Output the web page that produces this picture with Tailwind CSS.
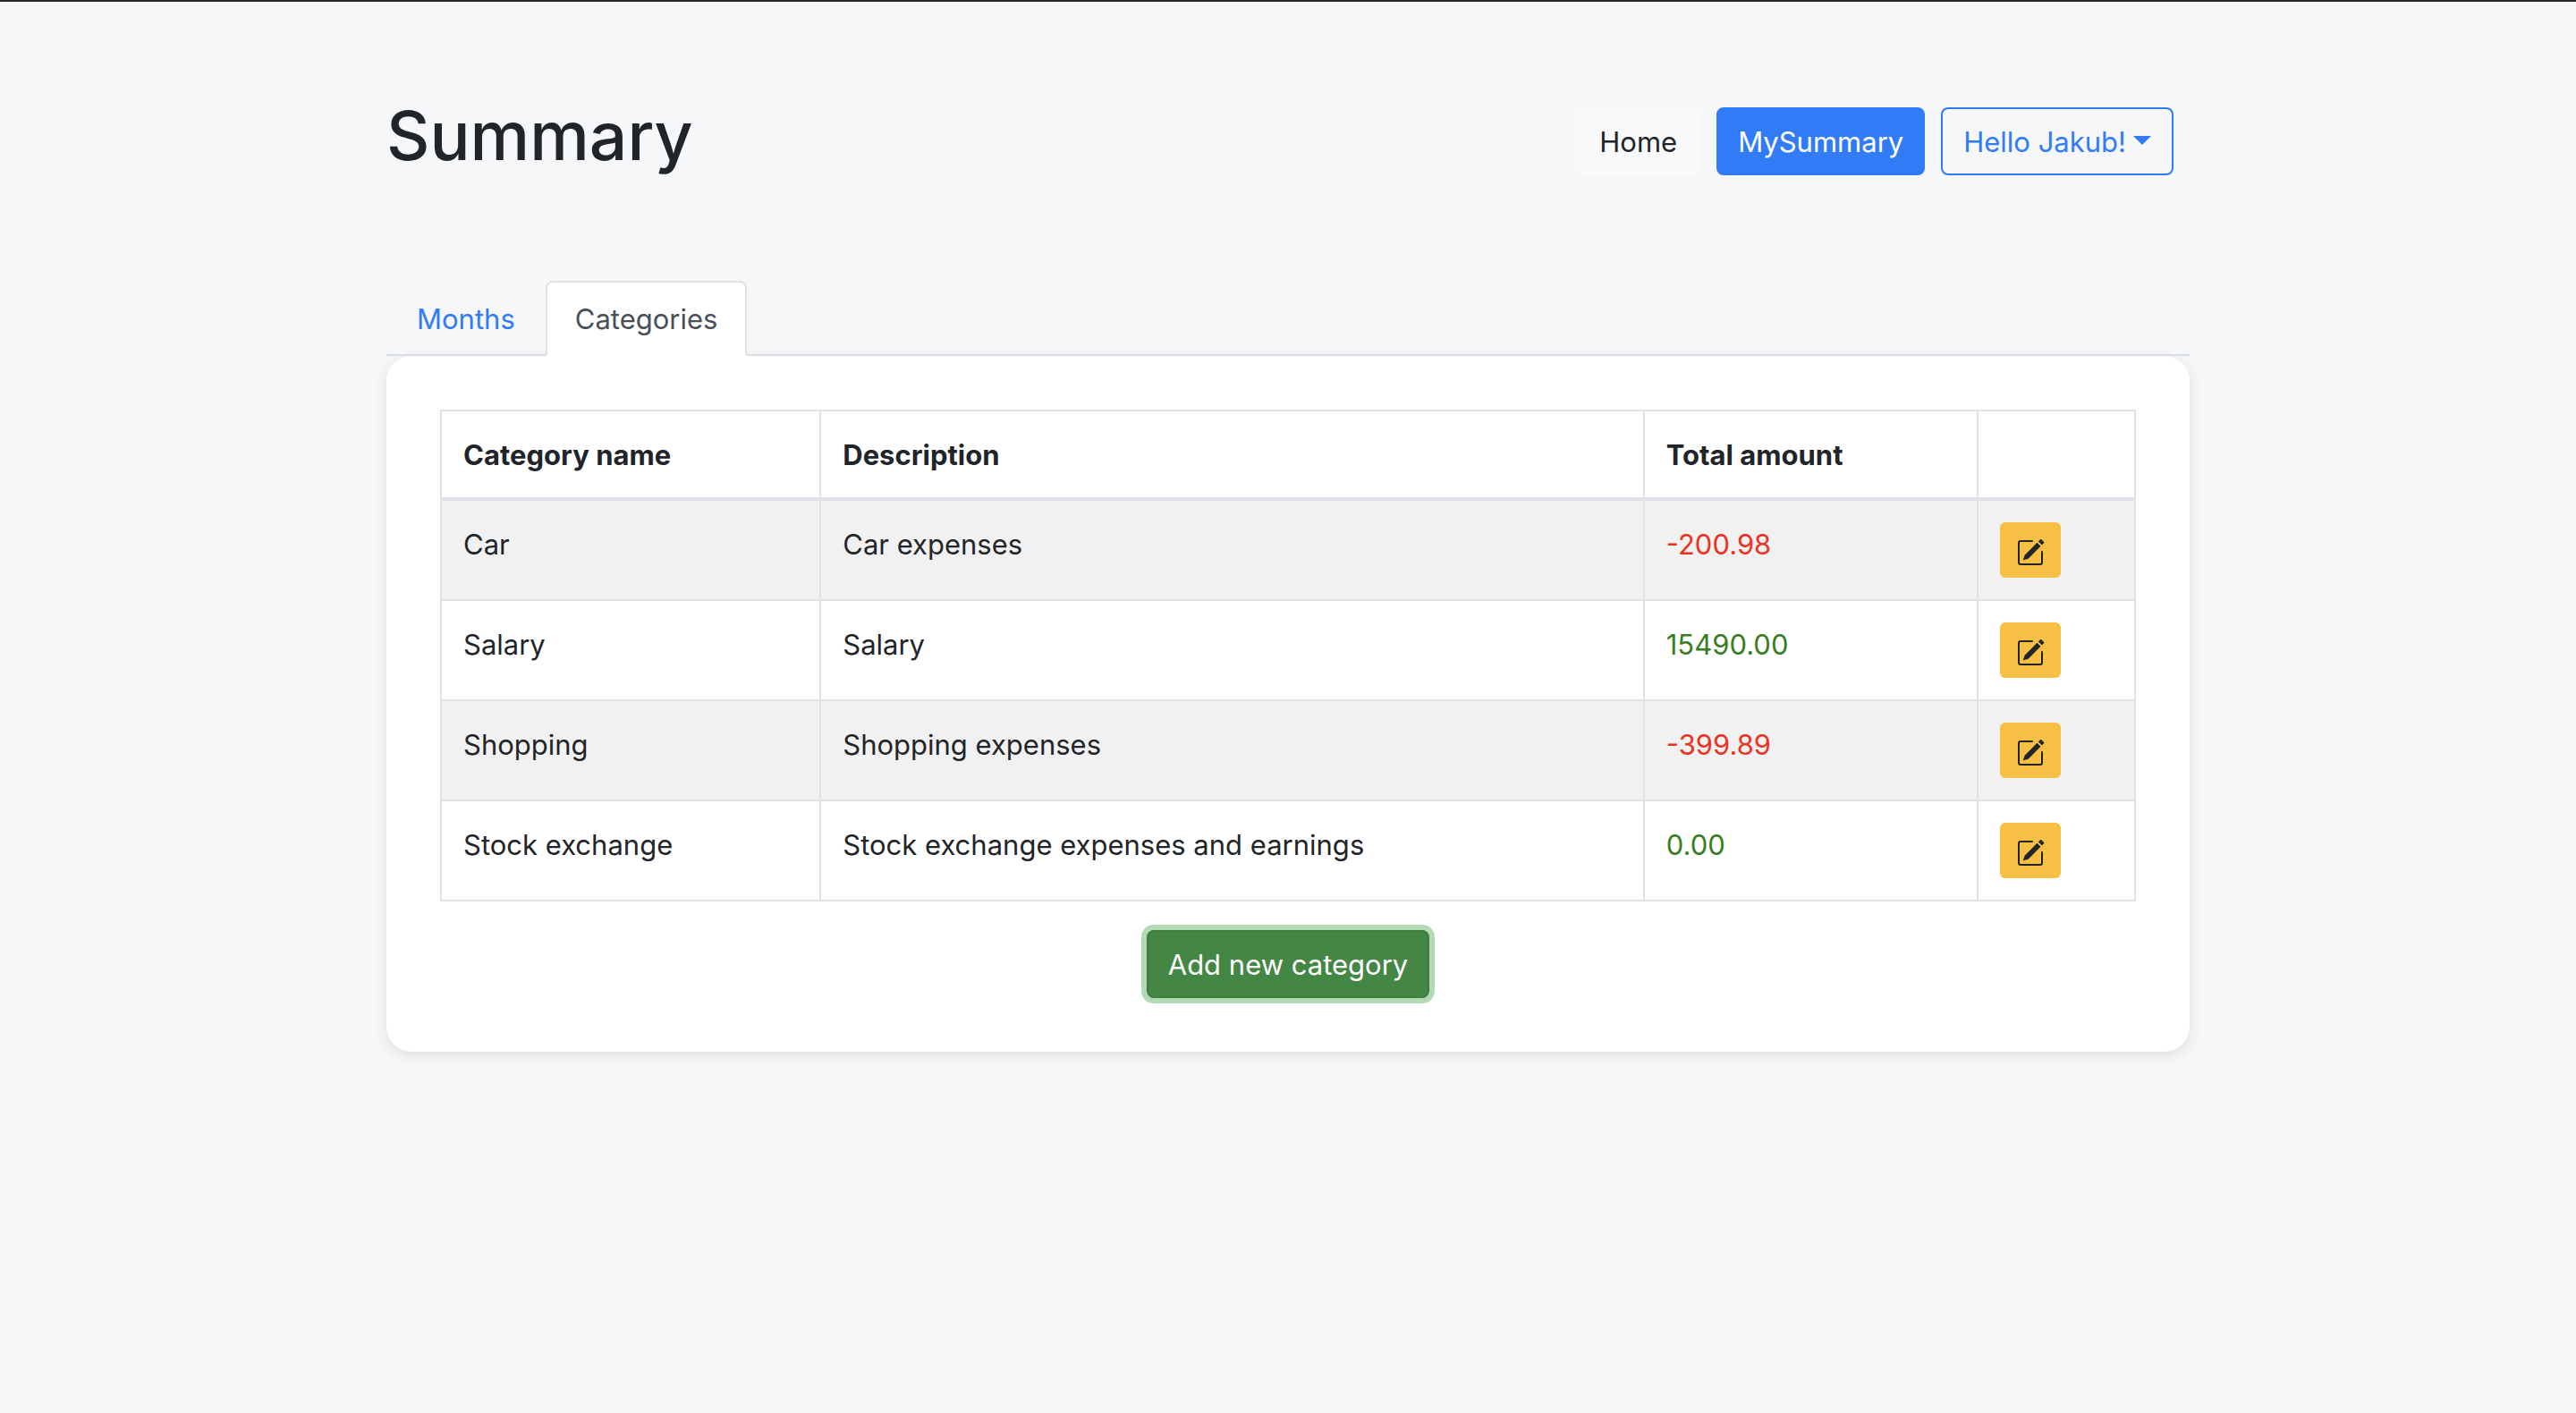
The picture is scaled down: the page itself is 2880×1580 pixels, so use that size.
<!DOCTYPE html>
<html lang="en">
<head>
<meta charset="utf-8">
<title>Summary</title>
<script src="https://cdn.jsdelivr.net/npm/@tailwindcss/browser@4"></script>
</head>
<body class="min-h-screen border-t-2 border-[#282829] bg-[#f6f7f9] font-['Inter',sans-serif] text-[31px] leading-[48px] text-[#212529]">
<svg class="hidden" aria-hidden="true">
  <symbol id="pencil-square" viewBox="0 0 16 16">
    <path d="M15.502 1.94a.5.5 0 0 1 0 .706L14.459 3.69l-2-2L13.502.646a.5.5 0 0 1 .707 0l1.293 1.293zm-1.75 2.456l-2-2L4.939 9.21a.5.5 0 0 0-.121.196l-.805 2.414a.25.25 0 0 0 .316.316l2.414-.805a.5.5 0 0 0 .196-.12l6.813-6.814z"/>
    <path fill-rule="evenodd" d="M1 13.5A1.5 1.5 0 0 0 2.5 15h11a1.5 1.5 0 0 0 1.5-1.5v-6a.5.5 0 0 0-1 0v6a.5.5 0 0 1-.5.5h-11a.5.5 0 0 1-.5-.5v-11a.5.5 0 0 1 .5-.5H9a.5.5 0 0 0 0-1H2.5A1.5 1.5 0 0 0 1 2.5v11z"/>
  </symbol>
</svg>
<div class="mx-auto w-[70%]">
  <header class="flex items-start justify-between pt-[102px]">
    <h1 class="text-[75px] leading-[96px] font-medium">Summary</h1>
    <nav class="flex gap-[18px] pt-4 pr-[18px]">
      <a href="#" class="rounded-lg border-2 border-[#f8f9fa] bg-[#f8f9fa] px-6 pt-[13px] pb-[11px]">Home</a>
      <a href="#" class="rounded-lg border-2 border-[#327bf7] bg-[#327bf7] px-[22px] pt-[13px] pb-[11px] text-white">MySummary</a>
      <button type="button" class="flex items-center gap-2 rounded-lg border-2 border-[#327bf7] px-[23px] pt-[13px] pb-[11px] text-[#327bf7]">Hello Jakub!
        <svg class="mb-1 h-[10px] w-5" viewBox="0 0 20 10" fill="currentColor" aria-hidden="true"><path d="M0 0h20L10 10z"/></svg>
      </button>
    </nav>
  </header>
  <main class="pt-[114px]">
    <nav class="relative z-10 flex border-b-2 border-[#d8dce1]">
      <a href="#" class="px-[34px] pt-[19px] pb-[15px] text-[#327bf7]">Months</a>
      <a href="#" class="-mb-[2px] rounded-t-lg border-2 border-[#dee2e6] border-b-white bg-white px-[31px] pt-[17px] pb-[15px] text-[#495057]">Categories</a>
    </nav>
    <section class="flex flex-col items-center gap-8 rounded-[28px] bg-white p-[60px] shadow-[0_4px_16px_rgba(0,0,0,0.1)]">
      <table class="w-full table-fixed border-collapse text-left [&_td]:border-2 [&_td]:border-[#dee2e6] [&_td]:px-6 [&_td]:pt-[25px] [&_td]:pb-[23px] [&_td:last-child]:py-6 [&_td]:align-top [&_th]:border-2 [&_th]:border-b-4 [&_th]:border-[#dee2e6] [&_th]:px-6 [&_th]:pt-[25px] [&_th]:pb-[23px]">
        <colgroup><col class="w-[22.4%]"><col class="w-[48.6%]"><col class="w-[19.7%]"><col class="w-[9.3%]"></colgroup>
        <thead>
          <tr><th>Category name</th><th>Description</th><th>Total amount</th><th></th></tr>
        </thead>
        <tbody>
          <tr class="bg-[#f1f1f1]"><td>Car</td><td>Car expenses</td><td class="text-[#ea3323]">-200.98</td>
            <td><button type="button" aria-label="Edit Car" class="block rounded-md bg-[#f6c044] px-[18px] pt-[18px] pb-3"><svg class="block size-8" fill="currentColor"><use href="#pencil-square"/></svg></button></td></tr>
          <tr><td>Salary</td><td>Salary</td><td class="text-[#377e22]">15490.00</td>
            <td><button type="button" aria-label="Edit Salary" class="block rounded-md bg-[#f6c044] px-[18px] pt-[18px] pb-3"><svg class="block size-8" fill="currentColor"><use href="#pencil-square"/></svg></button></td></tr>
          <tr class="bg-[#f1f1f1]"><td>Shopping</td><td>Shopping expenses</td><td class="text-[#ea3323]">-399.89</td>
            <td><button type="button" aria-label="Edit Shopping" class="block rounded-md bg-[#f6c044] px-[18px] pt-[18px] pb-3"><svg class="block size-8" fill="currentColor"><use href="#pencil-square"/></svg></button></td></tr>
          <tr><td>Stock exchange</td><td>Stock exchange expenses and earnings</td><td class="text-[#377e22]">0.00</td>
            <td><button type="button" aria-label="Edit Stock exchange" class="block rounded-md bg-[#f6c044] px-[18px] pt-[18px] pb-3"><svg class="block size-8" fill="currentColor"><use href="#pencil-square"/></svg></button></td></tr>
        </tbody>
      </table>
      <button type="button" class="rounded-lg border-2 border-[#3f7c3d] bg-[#448644] px-[22px] pt-[13px] pb-[11px] text-white ring-6 ring-[#b3dab5]">Add new category</button>
    </section>
  </main>
</div>
</body>
</html>
